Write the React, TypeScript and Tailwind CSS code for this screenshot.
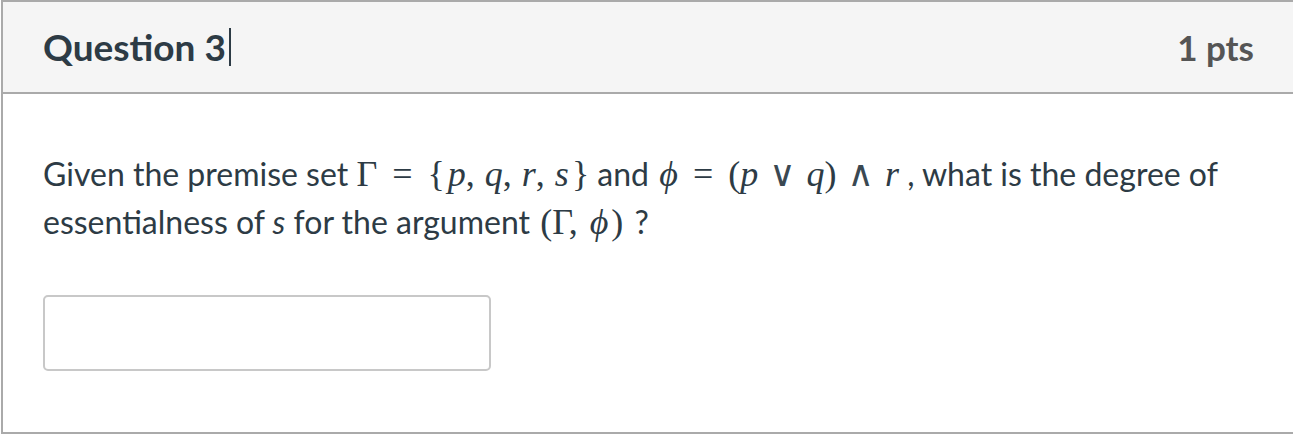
const mathFont = { fontFamily: '"Liberation Serif", "DejaVu Serif", serif' };

function M({ children }: { children: React.ReactNode }) {
  return (
    <span className="text-[36px] leading-none" style={mathFont}>
      {children}
    </span>
  );
}

function I({ children }: { children: React.ReactNode }) {
  return <span className="italic">{children}</span>;
}

// logic operator, lighter than the bold-looking fallback glyph
function Op({ children }: { children: React.ReactNode }) {
  return (
    <span className="mx-[11px] font-['DejaVu_Serif',serif] text-[36px] text-[#3a4852]">
      {children}
    </span>
  );
}

export default function App() {
  return (
    <div className="h-[437px] w-[1293px] overflow-hidden bg-white font-['Lato',sans-serif]">
      <div className="ml-[1px] h-[434px] w-[1300px] border-2 border-r-0 border-[#aaaaaa] text-[#2d3b45]">
        {/* Header */}
        <div className="flex h-[92px] items-center justify-between border-b-2 border-[#aaaaaa] bg-[#f5f5f5] pl-[40px] pr-[47px]">
          <h2 className="flex items-center text-[37px] font-bold">
            Question 3
            <span className="ml-[3px] inline-block h-[38px] w-[2px] bg-[#2d3b45]" />
          </h2>
          <div className="text-[35px] font-bold text-[#555555]">1 pts</div>
        </div>

        {/* Body */}
        <div className="pl-[40px] pt-[56px]">
          <p className="text-[32px] leading-[48px]">
            Given the premise set{" "}
            <M>
              Γ<span className="mx-[15px]">=</span>
              <span className="mr-[3px]">{"{"}</span>
              <I>p</I>
              <span className="mr-[10px]">,</span>
              <I>q</I>
              <span className="mr-[10px]">,</span>
              <I>r</I>
              <span className="mr-[10px]">,</span>
              <I>s</I>
              <span className="ml-[3px]">{"}"}</span>
            </M>{" "}
            and{" "}
            <M>
              <span className="ml-[2px]">
                <I>ϕ</I>
              </span>
              <span className="mx-[15px]">=</span>(<I>p</I>
              <Op>∨</Op>
              <I>q</I>)<Op>∧</Op>
              <I>r</I>
            </M>{" "}
            , what is the degree of
            <br />
            essentialness of <I>s</I> for the argument{" "}
            <M>
              <span className="ml-[2px]">(</span>Γ<span className="mr-[12px]">,</span>
              <I>ϕ</I>
              <span className="ml-[3px] mr-[3px]">)</span>
            </M>{" "}
            ?
          </p>
          <input
            type="text"
            className="mt-[49px] h-[76px] w-[448px] rounded-[5px] border-2 border-[#c8c8c8] bg-white outline-none"
          />
        </div>
      </div>
    </div>
  );
}
